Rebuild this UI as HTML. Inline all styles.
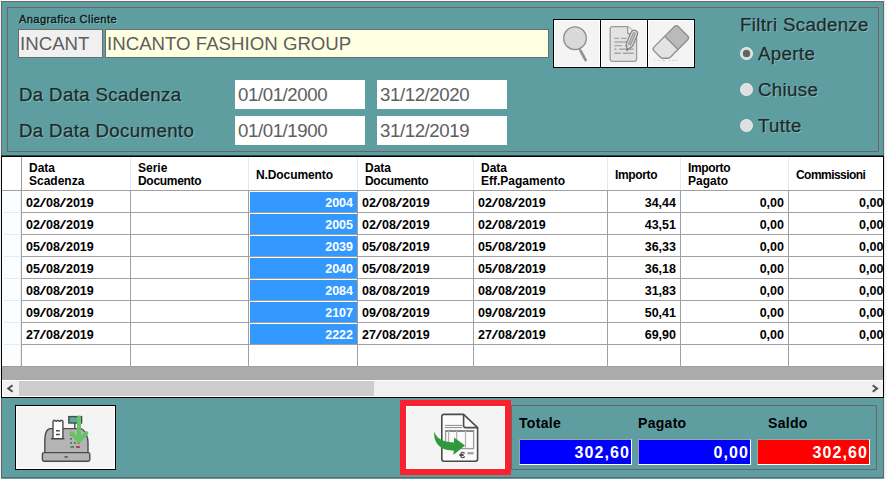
<!DOCTYPE html>
<html lang="it">
<head>
<meta charset="utf-8">
<title>Scadenze Cliente</title>
<style>
*{box-sizing:border-box;margin:0;padding:0}
html,body{width:887px;height:479px;overflow:hidden}
body{position:relative;background:#5f9ea0;font-family:"Liberation Sans",Arial,sans-serif;color:#000}
.a{position:absolute}
.t{position:absolute;white-space:nowrap;line-height:1}
/* window frame */
#fl0{left:0;top:0;width:1px;height:479px;background:#f2f2f2}
#fl1{left:1px;top:1px;width:1px;height:477px;background:#666}
#ft0{left:0;top:0;width:887px;height:1px;background:#fbfbfb}
#ft1{left:1px;top:1px;width:883px;height:1px;background:#666}
#fr0{left:883px;top:1px;width:1px;height:477px;background:#666}
#fr1{left:884px;top:0;width:3px;height:479px;background:linear-gradient(90deg,#e4e4e4,#f6f6f6 50%,#fdfdfd)}
#fb0{left:1px;top:477px;width:883px;height:1px;background:#666}
/* panels */
.panel{border:1px solid #676767}
#ptop{left:7px;top:7px;width:872px;height:145px}
#ptot{left:511px;top:405px;width:366px;height:65px}
/* top fields */
.lbl{font-size:18.67px;letter-spacing:.36px;-webkit-text-stroke:.25px #1d2b2b;color:#1d2b2b;text-shadow:1px 1px 0 rgba(180,215,215,.55)}
.fld{font-size:18.67px;color:#5e5e5e}
.box{border:1px solid #6c6c6c}
.rd{width:13px;height:13px;border-radius:50%;background:#dfdfdf;border:1px solid rgba(235,240,240,.75)}
.rd i{position:absolute;left:2px;top:2px;width:7px;height:7px;border-radius:50%;background:#636363;box-shadow:0 0 1px #636363}
/* grid */
#grid{left:1px;top:155px;width:883px;height:243px;background:#000;border-top:1px solid #2b4849}
#gin{left:1px;top:1px;width:881px;height:240px;background:#ababab;overflow:hidden}
.hd{font-weight:bold;font-size:12px;line-height:13px;color:#000}
.sl{display:inline-block;margin:0 1.3px;font-weight:normal;transform:scaleX(1.9)}
.cell{font-weight:bold;font-size:12.5px;color:#000}
.num{text-align:right}
.vl{position:absolute;width:1px;background:#a0a0a0}
.hl{position:absolute;height:1px;background:#a0a0a0}
.sel{position:absolute;background:#3399ff}
.selt{color:#fff;font-weight:bold;font-size:12.5px;text-align:right}
/* totals */
.tl{font-weight:bold;font-size:14px;letter-spacing:.3px;color:#000}
.tb{border:1px solid #fff;border-top-color:#a3a3a0;border-left-color:#a3a3a0;color:#fff;font-weight:bold;font-size:16px;text-align:right}
.btn{background:#f4f4f4;border:1px solid #000;box-shadow:inset 1px 1px 0 #fff,inset -1px -1px 0 #fff}
</style>
</head>
<body>
<!-- frame -->
<div class="a" id="ft0"></div><div class="a" id="fl0"></div>
<div class="a" id="ft1"></div><div class="a" id="fl1"></div>
<div class="a" id="fr0"></div><div class="a" id="fr1"></div><div class="a" id="fb0"></div>

<!-- top panel -->
<div class="a panel" id="ptop"></div>
<div class="t" style="left:19px;top:14px;font-size:11px;letter-spacing:.45px;-webkit-text-stroke:.35px #0c1a1c;color:#0c1a1c;text-shadow:1px 1px 0 rgba(190,220,220,.5)">Anagrafica Cliente</div>
<div class="a box" style="left:18px;top:29px;width:85px;height:29px;background:#f0f0f0"></div>
<div class="t fld" style="left:20px;top:35px">INCANT</div>
<div class="a box" style="left:105px;top:29px;width:444px;height:29px;background:#ffffe1"></div>
<div class="t fld" style="left:107px;top:35px">INCANTO FASHION GROUP</div>

<div class="t lbl" style="left:19px;top:86px">Da Data Scadenza</div>
<div class="t lbl" style="left:19px;top:122px">Da Data Documento</div>
<div class="a" style="left:235px;top:80px;width:130px;height:29px;background:#fff"></div>
<div class="a" style="left:377px;top:80px;width:130px;height:29px;background:#fff"></div>
<div class="a" style="left:235px;top:116px;width:130px;height:29px;background:#fff"></div>
<div class="a" style="left:377px;top:116px;width:130px;height:29px;background:#fff"></div>
<div class="t fld" style="letter-spacing:-.42px;left:238px;top:86px">01/01/2000</div>
<div class="t fld" style="letter-spacing:-.42px;left:380px;top:86px">31/12/2020</div>
<div class="t fld" style="letter-spacing:-.42px;left:238px;top:122px">01/01/1900</div>
<div class="t fld" style="letter-spacing:-.42px;left:380px;top:122px">31/12/2019</div>

<!-- toolbar buttons -->
<div class="a btn" style="left:553px;top:19px;width:48px;height:49px"></div>
<div class="a btn" style="left:600px;top:19px;width:48px;height:49px"></div>
<div class="a btn" style="left:647px;top:19px;width:48px;height:49px"></div>

<!-- toolbar icons -->
<svg class="a" style="left:553px;top:19px" width="48" height="49" viewBox="0 0 48 49">
 <circle cx="22" cy="19.2" r="11.3" fill="#d9d9d9" stroke="#8c8c8c" stroke-width="1.3"/>
 <path d="M27.2 14.2a7.5 7.5 0 0 0-3.6-2.6" fill="none" stroke="#e6e6e6" stroke-width="1" stroke-linecap="round"/>
 <path d="M26.4 29.8l1.2 2.2" stroke="#8c8c8c" stroke-width="1.3" fill="none"/>
 <path d="M27.6 31.8L32.6 41" stroke="#929292" stroke-width="2.7" stroke-linecap="round" fill="none"/>
</svg>
<svg class="a" style="left:600px;top:19px" width="48" height="49" viewBox="0 0 48 49">
 <path d="M12.4 7.6H27.6L36.6 15V40.2a2.2 2.2 0 0 1-2.2 2.2H12.4a2.2 2.2 0 0 1-2.2-2.2V9.8a2.2 2.2 0 0 1 2.2-2.2z" fill="#e3e3e3" stroke="#9a9a9a" stroke-width="1.3" stroke-linejoin="round"/>
 <path d="M27.6 7.6V13a2 2 0 0 0 2 2H36.6" fill="#f0f0f0" stroke="#9a9a9a" stroke-width="1.3" stroke-linejoin="round"/>
 <g stroke="#a6a6a6" stroke-width="1.4" fill="none">
  <path d="M14.3 19.4h4.6M20.8 19.4h6"/>
  <path d="M14.3 23h14"/>
  <path d="M14.3 26.6h7.6M24.8 26.6h2"/>
  <path d="M14.3 30.2h2.2M19.2 30.2h7M29.6 30.2h4"/>
  <path d="M14.3 34.3h6.6M22.8 34.3h11"/>
 </g>
 <g transform="translate(27 31.6) rotate(23)">
  <path d="M0 0L-3.4 -6.4V-18.4a3.4 3.4 0 0 1 6.8 0V-6.400z" fill="#d9d9d9" stroke="#868686" stroke-width="1.25" stroke-linejoin="round"/>
  <path d="M-1.15 -6.6V-18.2a1.15 1.15 0 0 1 2.3 0V-6.600z" fill="#bdbdbd" stroke="#949494" stroke-width=".9"/>
  <path d="M0 0L-1.2 -2.3H1.2z" fill="#777"/>
 </g>
</svg>
<svg class="a" style="left:647px;top:19px" width="49" height="49" viewBox="0 0 49 49">
 <g transform="translate(24.4 23.9) rotate(-45)">
  <path d="M-18 -9.4H0V9.4H-12.4L-18 3.800z" fill="#e3e3e3"/>
  <path d="M0 -9.4H13.4a3 3 0 0 1 3 3V6.4a3 3 0 0 1-3 3H0Z" fill="#bababa"/>
  <path d="M-15 -9.4H13.4a3 3 0 0 1 3 3V6.4a3 3 0 0 1-3 3H-11a3 3 0 0 1-2.200-.9l-3.900-3.900a3 3 0 0 1-.9-2.200V-6.400a3 3 0 0 1 3-3z" fill="none" stroke="#8e8e8e" stroke-width="1.3"/>
  <path d="M0 -9.4V9.4" stroke="#8e8e8e" stroke-width="1.3"/>
 </g>
 <path d="M7.5 41.6h1M10.5 41.4h2M15 41.8h3.5M22 41.6h1.5M25 41.4h2.5M28.5 41h2" stroke="#cfcfcf" stroke-width="1" fill="none"/>
</svg>
<!-- cash register icon -->
<svg class="a" style="z-index:5;left:36px;top:408px" width="60" height="60" viewBox="0 0 60 60">
 <path d="M8.8 45V33c0-7 2-12.4 6-12.4H44c4 0 8 7 8 14V45z" fill="#b4b4b4" stroke="#4b4b4b" stroke-width="1.4" stroke-linejoin="round"/>
 <rect x="6.4" y="44.6" width="47.4" height="8.6" rx="1.6" fill="#b4b4b4" stroke="#4b4b4b" stroke-width="1.4"/>
 <rect x="28.4" y="48.2" width="3.4" height="1.4" fill="#4b4b4b"/>
 <path d="M38.8 15v5.6" stroke="#4b4b4b" stroke-width="1.4"/>
 <rect x="32.8" y="8.6" width="12.8" height="6.4" fill="#5aa999" stroke="#4b4b4b" stroke-width="1.4"/>
 <path d="M17 30.6V13.2l1.6-1 1.6 1.2 1.7-1.2 1.7 1.2 1.6-1.2 1.7 1V30.6z" fill="#fff" stroke="#4b4b4b" stroke-width="1.4" stroke-linejoin="round"/>
 <path d="M15 30.7h13.4" stroke="#4b4b4b" stroke-width="1.4"/>
 <path d="M20 22.8h3.8M20 26.5h3.8" stroke="#4b4b4b" stroke-width="1.5"/>
 <g fill="#5a5a5a"><rect x="34.2" y="26" width="1.7" height="1.7"/><rect x="34.2" y="30" width="1.7" height="1.7"/><rect x="34.2" y="34" width="1.7" height="1.7"/><rect x="38" y="34" width="1.7" height="1.7"/><rect x="41.8" y="34" width="1.7" height="1.7"/></g>
 <rect x="34.4" y="38.2" width="3.6" height="1.6" fill="#2e8b3e"/>
 <rect x="40.2" y="38.2" width="3.6" height="1.6" fill="#b52323"/>
 <path d="M43 9.6V32.4M35.6 25.2L43 33l7.4-7.8" fill="none" stroke="#63c565" stroke-width="4" stroke-linecap="round" stroke-linejoin="round"/>
</svg>
<!-- export document icon -->
<svg class="a" style="z-index:5;left:426px;top:408px" width="60" height="60" viewBox="0 0 60 60">
 <path d="M18 6.4H37.6L51.6 19.6V51a2.2 2.2 0 0 1-2.2 2.2H18a2.2 2.2 0 0 1-2.2-2.2V8.6A2.2 2.2 0 0 1 18 6.400z" fill="#fbfbfb" stroke="#4b4b4b" stroke-width="1.6" stroke-linejoin="round"/>
 <path d="M37.6 6.4V17.6a2 2 0 0 0 2 2H51.6" fill="none" stroke="#4b4b4b" stroke-width="1.6" stroke-linejoin="round"/>
 <path d="M18.8 17.4H36.4M18.8 19.6H36.4" stroke="#8a8a8a" stroke-width="1" fill="none"/>
 <rect x="19.6" y="22.6" width="28" height="18" fill="none" stroke="#9c9c9c" stroke-width="1.3"/>
 <path d="M19.6 23.2H47.6" stroke="#7c7c7c" stroke-width="1.4"/>
 <path d="M22.6 23V40M30.7 23V40M39.5 23V40" stroke="#b5b5b5" stroke-width="1.3" fill="none"/>
 <path d="M41.4 45.2h6.2" stroke="#a0a0a0" stroke-width="2.2"/>
 <text x="33.6" y="49.7" font-family="Liberation Sans, Arial, sans-serif" font-size="9.6" fill="#444" stroke="#444" stroke-width=".35">€</text>
 <path d="M8.2 23.6C10 30 17 34.6 27.8 34.4L28.2 29.6L39 37.6L27.4 47L27.8 42.4C15 43.4 7 35 8.200 23.600z" fill="#2f9a3c"/>
</svg>

<!-- radio group -->
<div class="t lbl" style="left:740px;top:16px">Filtri Scadenze</div>
<div class="t lbl" style="left:758px;top:45px">Aperte</div>
<div class="t lbl" style="left:758px;top:81px">Chiuse</div>
<div class="t lbl" style="left:758px;top:117px">Tutte</div>

<div class="a rd" style="left:740px;top:47px"><i></i></div>
<div class="a rd" style="left:740px;top:83px"></div>
<div class="a rd" style="left:740px;top:119px"></div>
<!-- grid -->
<div class="a" id="grid"><div class="a" id="gin">
<div class="a" style="left:0;top:0;width:881px;height:33px;background:#fff"></div>
<div class="a" style="left:0;top:33px;width:881px;height:177px;background:#fff"></div>
<div class="a" style="left:0;top:34px;width:19px;height:175px;background:#fcfdfe"></div>
<div class="vl" style="left:18px;top:34px;height:175px;background:#e9eff9"></div>
<div class="vl" style="left:19px;top:0;height:33px;background:#9a9a9a"></div>
<div class="vl" style="left:128px;top:0;height:33px;background:#e3eaf6"></div>
<div class="vl" style="left:246px;top:0;height:33px;background:#e3eaf6"></div>
<div class="vl" style="left:355px;top:0;height:33px;background:#e3eaf6"></div>
<div class="vl" style="left:471px;top:0;height:33px;background:#e3eaf6"></div>
<div class="vl" style="left:605px;top:0;height:33px;background:#e3eaf6"></div>
<div class="vl" style="left:678px;top:0;height:33px;background:#e3eaf6"></div>
<div class="vl" style="left:786px;top:0;height:33px;background:#e3eaf6"></div>
<div class="hl" style="left:0;top:33px;width:881px"></div>
<div class="vl" style="left:19px;top:33px;height:177px"></div>
<div class="vl" style="left:128px;top:33px;height:177px"></div>
<div class="vl" style="left:246px;top:33px;height:177px"></div>
<div class="vl" style="left:355px;top:33px;height:177px"></div>
<div class="vl" style="left:471px;top:33px;height:177px"></div>
<div class="vl" style="left:605px;top:33px;height:177px"></div>
<div class="vl" style="left:678px;top:33px;height:177px"></div>
<div class="vl" style="left:786px;top:33px;height:177px"></div>
<div class="hl" style="left:19px;top:55px;width:862px"></div>
<div class="hl" style="left:2px;top:55px;width:16px;background:#e2eaf7"></div>
<div class="hl" style="left:19px;top:77px;width:862px"></div>
<div class="hl" style="left:2px;top:77px;width:16px;background:#e2eaf7"></div>
<div class="hl" style="left:19px;top:99px;width:862px"></div>
<div class="hl" style="left:2px;top:99px;width:16px;background:#e2eaf7"></div>
<div class="hl" style="left:19px;top:121px;width:862px"></div>
<div class="hl" style="left:2px;top:121px;width:16px;background:#e2eaf7"></div>
<div class="hl" style="left:19px;top:143px;width:862px"></div>
<div class="hl" style="left:2px;top:143px;width:16px;background:#e2eaf7"></div>
<div class="hl" style="left:19px;top:165px;width:862px"></div>
<div class="hl" style="left:2px;top:165px;width:16px;background:#e2eaf7"></div>
<div class="hl" style="left:19px;top:187px;width:862px"></div>
<div class="hl" style="left:2px;top:187px;width:16px;background:#e2eaf7"></div>
<div class="hl" style="left:19px;top:209px;width:862px"></div>
<div class="hl" style="left:0;top:209px;width:19px"></div>
<div class="t hd" style="left:27px;top:5px">Data<br>Scadenza</div>
<div class="t hd" style="left:136px;top:5px">Serie<br><span style="letter-spacing:-.3px">Documento</span></div>
<div class="t hd" style="left:254px;top:12px"><span style="letter-spacing:-.1px">N.Documento</span></div>
<div class="t hd" style="left:363px;top:5px">Data<br><span style="letter-spacing:-.3px">Documento</span></div>
<div class="t hd" style="left:479px;top:5px">Data<br>Eff.Pagamento</div>
<div class="t hd" style="left:613px;top:12px"><span style="letter-spacing:-.35px">Importo</span></div>
<div class="t hd" style="left:686px;top:5px"><span style="letter-spacing:-.35px">Importo</span><br>Pagato</div>
<div class="t hd" style="left:794px;top:12px"><span style="letter-spacing:-.55px">Commissioni</span></div>
<div class="t cell" style="left:24px;top:40px">02<span class="sl">/</span>08<span class="sl">/</span>2019</div>
<div class="sel" style="left:248px;top:35px;width:107px;height:20px"></div>
<div class="t selt" style="left:248px;top:40px;width:103px">2004</div>
<div class="t cell" style="left:360px;top:40px">02<span class="sl">/</span>08<span class="sl">/</span>2019</div>
<div class="t cell" style="left:476px;top:40px">02<span class="sl">/</span>08<span class="sl">/</span>2019</div>
<div class="t cell num" style="left:606px;top:40px;width:68px">34,44</div>
<div class="t cell num" style="left:679px;top:40px;width:103px">0,00</div>
<div class="t cell" style="left:857px;top:40px">0,00</div>
<div class="t cell" style="left:24px;top:62px">02<span class="sl">/</span>08<span class="sl">/</span>2019</div>
<div class="sel" style="left:248px;top:57px;width:107px;height:20px"></div>
<div class="t selt" style="left:248px;top:62px;width:103px">2005</div>
<div class="t cell" style="left:360px;top:62px">02<span class="sl">/</span>08<span class="sl">/</span>2019</div>
<div class="t cell" style="left:476px;top:62px">02<span class="sl">/</span>08<span class="sl">/</span>2019</div>
<div class="t cell num" style="left:606px;top:62px;width:68px">43,51</div>
<div class="t cell num" style="left:679px;top:62px;width:103px">0,00</div>
<div class="t cell" style="left:857px;top:62px">0,00</div>
<div class="t cell" style="left:24px;top:84px">05<span class="sl">/</span>08<span class="sl">/</span>2019</div>
<div class="sel" style="left:248px;top:79px;width:107px;height:20px"></div>
<div class="t selt" style="left:248px;top:84px;width:103px">2039</div>
<div class="t cell" style="left:360px;top:84px">05<span class="sl">/</span>08<span class="sl">/</span>2019</div>
<div class="t cell" style="left:476px;top:84px">05<span class="sl">/</span>08<span class="sl">/</span>2019</div>
<div class="t cell num" style="left:606px;top:84px;width:68px">36,33</div>
<div class="t cell num" style="left:679px;top:84px;width:103px">0,00</div>
<div class="t cell" style="left:857px;top:84px">0,00</div>
<div class="t cell" style="left:24px;top:106px">05<span class="sl">/</span>08<span class="sl">/</span>2019</div>
<div class="sel" style="left:248px;top:101px;width:107px;height:20px"></div>
<div class="t selt" style="left:248px;top:106px;width:103px">2040</div>
<div class="t cell" style="left:360px;top:106px">05<span class="sl">/</span>08<span class="sl">/</span>2019</div>
<div class="t cell" style="left:476px;top:106px">05<span class="sl">/</span>08<span class="sl">/</span>2019</div>
<div class="t cell num" style="left:606px;top:106px;width:68px">36,18</div>
<div class="t cell num" style="left:679px;top:106px;width:103px">0,00</div>
<div class="t cell" style="left:857px;top:106px">0,00</div>
<div class="t cell" style="left:24px;top:128px">08<span class="sl">/</span>08<span class="sl">/</span>2019</div>
<div class="sel" style="left:248px;top:123px;width:107px;height:20px"></div>
<div class="t selt" style="left:248px;top:128px;width:103px">2084</div>
<div class="t cell" style="left:360px;top:128px">08<span class="sl">/</span>08<span class="sl">/</span>2019</div>
<div class="t cell" style="left:476px;top:128px">08<span class="sl">/</span>08<span class="sl">/</span>2019</div>
<div class="t cell num" style="left:606px;top:128px;width:68px">31,83</div>
<div class="t cell num" style="left:679px;top:128px;width:103px">0,00</div>
<div class="t cell" style="left:857px;top:128px">0,00</div>
<div class="t cell" style="left:24px;top:150px">09<span class="sl">/</span>08<span class="sl">/</span>2019</div>
<div class="sel" style="left:248px;top:145px;width:107px;height:20px"></div>
<div class="t selt" style="left:248px;top:150px;width:103px">2107</div>
<div class="t cell" style="left:360px;top:150px">09<span class="sl">/</span>08<span class="sl">/</span>2019</div>
<div class="t cell" style="left:476px;top:150px">09<span class="sl">/</span>08<span class="sl">/</span>2019</div>
<div class="t cell num" style="left:606px;top:150px;width:68px">50,41</div>
<div class="t cell num" style="left:679px;top:150px;width:103px">0,00</div>
<div class="t cell" style="left:857px;top:150px">0,00</div>
<div class="t cell" style="left:24px;top:172px">27<span class="sl">/</span>08<span class="sl">/</span>2019</div>
<div class="sel" style="left:248px;top:167px;width:107px;height:20px"></div>
<div class="t selt" style="left:248px;top:172px;width:103px">2222</div>
<div class="t cell" style="left:360px;top:172px">27<span class="sl">/</span>08<span class="sl">/</span>2019</div>
<div class="t cell" style="left:476px;top:172px">27<span class="sl">/</span>08<span class="sl">/</span>2019</div>
<div class="t cell num" style="left:606px;top:172px;width:68px">69,90</div>
<div class="t cell num" style="left:679px;top:172px;width:103px">0,00</div>
<div class="t cell" style="left:857px;top:172px">0,00</div>
<div class="a" style="left:0;top:223px;width:881px;height:17px;background:#fff"></div>
<div class="a" style="left:1px;top:224px;width:880px;height:15px;background:#f0f0f0"></div>
<div class="a" style="left:17px;top:224px;width:355px;height:15px;background:#cdcdcd"></div>
<svg class="a" style="left:3px;top:226px" width="11" height="11" viewBox="0 0 11 11"><path d="M7.6 2.3 L3.3 5.5 L7.6 8.700" fill="none" stroke="#505050" stroke-width="2"/></svg>
<svg class="a" style="left:867px;top:226px" width="11" height="11" viewBox="0 0 11 11"><path d="M3.7 2.3 L8 5.5 L3.7 8.700" fill="none" stroke="#505050" stroke-width="2"/></svg>
</div></div>

<!-- bottom -->
<div class="a btn" style="left:15px;top:405px;width:101px;height:65px"></div>
<div class="a" style="left:400px;top:400px;width:111px;height:75px;background:#fb2230"></div>
<div class="a" style="left:406px;top:406px;width:99px;height:63px;background:#f4f4f4;box-shadow:inset 1px 1px 0 #fff,inset -1px -1px 0 #fff"></div>
<div class="a panel" id="ptot"></div>
<div class="t tl" style="left:519px;top:416px">Totale</div>
<div class="t tl" style="left:638px;top:416px">Pagato</div>
<div class="t tl" style="left:768px;top:416px">Saldo</div>
<div class="a tb" style="left:519px;top:439px;width:113px;height:26px;background:#0000ff"></div>
<div class="a tb" style="left:638px;top:439px;width:113px;height:26px;background:#0000ff"></div>
<div class="a tb" style="left:757px;top:439px;width:113px;height:26px;background:#ff0000"></div>
<div class="t tb" style="border:0;letter-spacing:1.1px;left:519px;top:445px;width:111px">302,60</div>
<div class="t tb" style="border:0;letter-spacing:1.1px;left:638px;top:445px;width:111px">0,00</div>
<div class="t tb" style="border:0;letter-spacing:1.1px;left:757px;top:445px;width:111px">302,60</div>
</body>
</html>
